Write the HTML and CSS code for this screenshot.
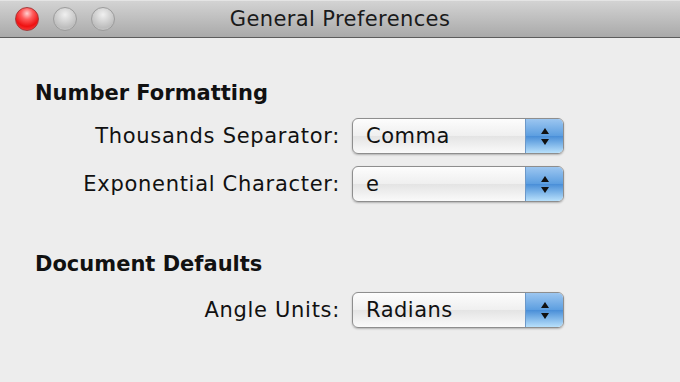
FILE: index.html
```html
<!DOCTYPE html>
<html lang="en">
<head>
    <meta charset="UTF-8">
    <title>General Preferences</title>
    <link rel="stylesheet" href="styles.css">
</head>
<body>
    <div class="window">
        <!-- Title bar -->
        <div class="titlebar">
            <div class="lights">
                <span class="light close"></span>
                <span class="light"></span>
                <span class="light"></span>
            </div>
            <div class="title">General Preferences</div>
        </div>

        <div class="content">
            <h2 class="group-title">Number Formatting</h2>
            <div class="row">
                <label class="label">Thousands Separator:</label>
                <div class="popup"><span class="value">Comma</span><span class="stepper"><i class="up"></i><i class="down"></i></span></div>
            </div>
            <div class="row">
                <label class="label">Exponential Character:</label>
                <div class="popup"><span class="value">e</span><span class="stepper"><i class="up"></i><i class="down"></i></span></div>
            </div>

            <h2 class="group-title second">Document Defaults</h2>
            <div class="row">
                <label class="label">Angle Units:</label>
                <div class="popup"><span class="value">Radians</span><span class="stepper"><i class="up"></i><i class="down"></i></span></div>
            </div>
        </div>
    </div>
</body>
</html>
```

FILE: styles.css
```css
body {
    margin: 0;
    background: #ededed;
    font-family: "DejaVu Sans", Verdana, sans-serif;
    color: #111;
}
.window {
    width: 680px;
    height: 382px;
    overflow: hidden;
}
.titlebar {
    border-top: 1px solid #e4e4e4;
    border-bottom: 1px solid #5c5c5c;
    box-sizing: border-box;
    height: 38px;
    background: linear-gradient(#d3d3d3, #a9a9a9);
    display: flex;
    align-items: center;
    position: relative;
}
.lights {
    display: flex;
    gap: 14px;
    padding-left: 15px;
}
.light {
    width: 24px;
    height: 24px;
    border-radius: 50%;
    box-sizing: border-box;
    border: 1px solid #9c9c9c;
    background: radial-gradient(circle at 50% 30%, #f0f0f0 0, #d6d6d6 35%, #bdbdbd 70%, #cfcfcf 100%);
}
.light.close {
    border-color: #a63a3a;
    background: radial-gradient(circle at 50% 25%, #ffd0d0 0, #ff5a5a 30%, #e11 65%, #f55 100%);
}
.title {
    position: absolute;
    left: 0;
    right: 0;
    text-align: center;
    font-size: 21px;
    letter-spacing: 0.4px;
    color: #1a1a1a;
}
.content {
    padding: 43px 0 0 35px;
}
.group-title {
    margin: 0 0 13px;
    font-size: 21px;
    font-weight: bold;
}
.group-title.second {
    margin-top: 50px;
    margin-bottom: 16px;
}
.row {
    display: flex;
    align-items: center;
    margin-bottom: 12px;
}
.label {
    width: 305px;
    text-align: right;
    font-size: 21px;
    letter-spacing: 0.7px;
    margin-right: 12px;
}
.popup {
    width: 212px;
    height: 36px;
    box-sizing: border-box;
    border: 1px solid #8e8e8e;
    border-radius: 6px;
    background: linear-gradient(#fdfdfd, #efefef 50%, #e4e4e4 51%, #fafafa);
    box-shadow: 0 1px 2px rgba(0, 0, 0, 0.25);
    display: flex;
    overflow: hidden;
}
.value {
    flex: 1;
    padding-left: 13px;
    font-size: 21px;
    letter-spacing: 0.5px;
    line-height: 34px;
}
.stepper {
    width: 37px;
    border-left: 1px solid #6c98c8;
    background: linear-gradient(#9cc6f0, #5c9ee0 50%, #4a8fd8 51%, #b8e0fb);
    display: flex;
    flex-direction: column;
    align-items: center;
    justify-content: center;
    gap: 5px;
}
.stepper i {
    width: 0;
    height: 0;
    border-left: 4px solid transparent;
    border-right: 4px solid transparent;
}
.stepper .up {
    border-bottom: 6px solid #111;
}
.stepper .down {
    border-top: 6px solid #111;
}
```
